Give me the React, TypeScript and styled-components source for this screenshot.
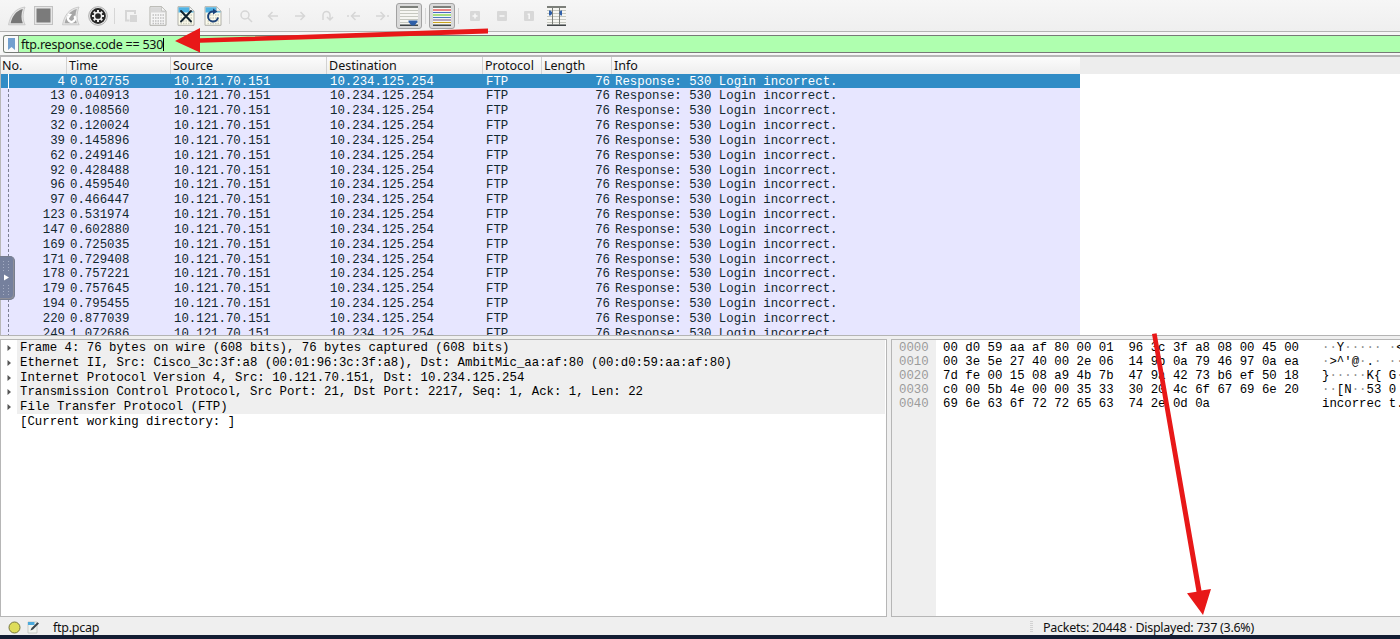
import React from "react";
import styled, { createGlobalStyle } from "styled-components";

const Global = createGlobalStyle`
  * { box-sizing: border-box; }
  body { margin: 0; overflow: hidden; background: #efefef; }
`;

const MONO = '"Liberation Mono", monospace';
const UI = '"Noto Sans", sans-serif';

const Window = styled.div`
  position: relative;
  display: flex;
  flex-direction: column;
  width: 1400px;
  height: 639px;
  overflow: hidden;
  background: #efefef;
  font-family: ${UI};
  font-size: 12.5px;
  color: #111;
`;

const Toolbar = styled.div`
  display: flex;
  align-items: center;
  height: 32px;
  flex: none;
  padding-left: 3px;
  background: linear-gradient(#f6f6f6, #efefef);
  border-bottom: 1px solid #b4b4b4;
`;

const Tool = styled.span<{ $w: number }>`
  display: flex;
  align-items: center;
  justify-content: center;
  flex: none;
  width: ${(p) => p.$w}px;
  height: 31px;
`;

const Pressed = styled.span`
  display: flex;
  align-items: center;
  justify-content: center;
  width: 26px;
  height: 26px;
  border: 1px solid #a2a2a2;
  border-radius: 3px;
  background: #dadada;
`;

const Separator = styled.span<{ $w: number }>`
  flex: none;
  width: ${(p) => p.$w}px;
  height: 16px;
  background: linear-gradient(#d6d6d6, #d6d6d6) center / 1px 100% no-repeat;
`;

const FilterBar = styled.div`
  display: flex;
  flex: none;
  height: 23px;
  padding: 3px 0 2px 3px;
  background: #f6f6f6;
`;

const FilterInput = styled.div`
  display: flex;
  align-items: center;
  flex: 1;
  height: 18px;
  border: 1px solid #767b76;
  border-right: 0;
  border-radius: 3px 0 0 3px;
  background: #afffaf;
  overflow: hidden;
`;

const Bookmark = styled.span`
  display: flex;
  align-items: center;
  justify-content: center;
  width: 15px;
  height: 16px;
  background: #fafafa;
  border-right: 1px solid #8c968c;
`;

const FilterText = styled.span`
  padding: 1px 0 0 2px;
  line-height: 16px;
  letter-spacing: -0.23px;
  white-space: pre;
`;

const Caret = styled.span`
  width: 1px;
  height: 13px;
  background: #000;
`;

const PacketList = styled.div`
  position: relative;
  flex: none;
  height: 281px;
  overflow: hidden;
  background: #fff;
  border-top: 2px solid #b6b6b6;
  border-bottom: 1px solid #b4b4b4;
  border-left: 1px solid #b8b8b8;
`;

const COLS = "66px 104px 156px 156px 59px 70px 468px";

const HeaderRow = styled.div`
  display: grid;
  grid-template-columns: ${COLS};
  height: 16.6px;
  background: linear-gradient(#fcfcfc, #eeeeee) left / 1079px 100% no-repeat #ededed;
`;

const HeaderCell = styled.span<{ $first?: boolean; $last?: boolean }>`
  padding-left: ${(p) => (p.$first ? 1 : 2)}px;
  line-height: 17px;
  border-right: ${(p) => (p.$last ? "0" : "1px solid #d2d2d2")};
  white-space: nowrap;
`;

const PacketRow = styled.div<{ $selected?: boolean }>`
  display: grid;
  grid-template-columns: ${COLS};
  width: 1079px;
  height: 14.84px;
  font: 12.37px/14.84px ${MONO};
  color: ${(p) => (p.$selected ? "#fff" : "#12272e")};
  background: ${(p) => (p.$selected ? "#308cc6" : "#e7e6ff")};
`;

const Cell = styled.span<{ $right?: boolean }>`
  padding: ${(p) => (p.$right ? "1px 2px 0 0" : "1px 0 0 3px")};
  text-align: ${(p) => (p.$right ? "right" : "left")};
  white-space: pre;
`;

const Thread = styled.span`
  position: absolute;
  left: 7px;
  top: 17px;
  width: 1px;
  height: 262px;
  background: linear-gradient(#fff 15px, transparent 15px),
    repeating-linear-gradient(#7b7f93 0 3px, transparent 3px 5px);
`;

const Lower = styled.div`
  display: flex;
  flex: none;
  gap: 4px;
  height: 281px;
  padding-top: 3px;
`;

const Pane = styled.div<{ $w?: number }>`
  ${(p) => (p.$w ? `width: ${p.$w}px; flex: none;` : "flex: 1; min-width: 0;")}
  border: 1px solid #b6b6b6;
  background: #fff;
  overflow: hidden;
`;

const TreeRow = styled.div`
  display: flex;
  align-items: center;
  height: 14.84px;
  font: 12.37px/14.84px ${MONO};
  color: #000;
  white-space: pre;
`;

const TreeArrow = styled.span`
  display: flex;
  flex: none;
  width: 16px;
  padding: 1px 0 0 6px;
`;

const TreeText = styled.span<{ $plain?: boolean }>`
  flex: 1;
  height: 14.84px;
  padding: 1px 0 0 3px;
  margin-right: 1px;
  background: ${(p) => (p.$plain ? "transparent" : "#efefef")};
`;

const HexPane = styled(Pane)`
  display: flex;
  border-right: 0;
  font: 12.37px/14px ${MONO};
  color: #000;
  white-space: pre;
`;

const Offsets = styled.div`
  flex: none;
  width: 44px;
  padding: 1px 0 0 7px;
  background: #efefef;
  color: #9b9b9b;
`;

const HexBytes = styled.div`
  flex: none;
  width: 386px;
  padding: 1px 0 0 7px;
`;

const Ascii = styled.div`
  flex: none;
  padding-top: 1px;
`;

const Dot = styled.span`
  color: #8e8e8e;
`;

const StatusBar = styled.div`
  display: flex;
  align-items: center;
  flex: none;
  height: 18px;
  padding-top: 2px;
  background: #efefef;
  white-space: pre;
`;

const StatusIcons = styled.span`
  display: flex;
  align-items: center;
  gap: 6px;
  width: 53px;
  padding-left: 8px;
`;

const StatusText = styled.span<{ $w?: number; $spacing: number }>`
  width: ${(p) => (p.$w ? `${p.$w}px` : "auto")};
  line-height: 18px;
  padding-top: 1px;
  letter-spacing: ${(p) => p.$spacing}px;
`;

const Grip = styled.span`
  width: 3px;
  height: 12px;
  margin-right: 10px;
  background: repeating-linear-gradient(#d2d2d2 0 1px, transparent 1px 2px);
`;

const Desktop = styled.div`
  flex: 1;
  background: #131d33;
`;

const DrawerHandle = styled.div`
  position: absolute;
  left: 0;
  top: 256px;
  width: 15px;
  height: 44px;
  border: 1px solid #767d8f;
  border-left: 0;
  border-radius: 0 5px 5px 0;
  background: #75809d;
  box-shadow: inset -1px -1px 0 #8e8f99;
`;

const Annotations = styled.svg`
  position: absolute;
  left: 0;
  top: 0;
`;

const Fin = () => (
  <svg width="20" height="20" viewBox="0 0 20 20">
    <path d="M1.5 18.8C3.5 9 8 2.5 18 1C15.5 8 15.5 14 18.2 18.8Z" fill="#e4e4e4" stroke="#bdbdbd" strokeWidth=".7" />
    <path d="M3.6 17.3C5.5 9.5 9 4.7 15.8 2.9C14 8 14 13 15.8 17.3Z" fill="#777" />
  </svg>
);

const Stop = () => (
  <svg width="19" height="19" viewBox="0 0 19 19">
    <rect x=".5" y=".5" width="18" height="18" fill="#e6e6e6" stroke="#c2c2c2" />
    <rect x="2.5" y="2.5" width="14" height="14" fill="#7b7b7b" />
  </svg>
);

const Restart = () => (
  <svg width="20" height="20" viewBox="0 0 20 20">
    <path d="M1.5 18.8C3.5 9 8 2.5 18 1C15.5 8 15.5 14 18.2 18.8Z" fill="#e6e6e6" stroke="#bdbdbd" strokeWidth=".7" />
    <path d="M3.6 17.3C5.5 9.5 9 4.7 15.8 2.9C14 8 14 13 15.8 17.3Z" fill="#a6a6a6" />
    <path d="M7.7 10A3.6 3.6 0 1 0 13.3 10" fill="none" stroke="#fff" strokeWidth="2.2" />
    <path d="M6.5 7.5L11 8L8.2 12Z" fill="#fff" />
  </svg>
);

const TEETH = [0, 45, 90, 135, 180, 225, 270, 315];
const Gear = () => (
  <svg width="20" height="20" viewBox="0 0 20 20">
    <circle cx="10" cy="10" r="9.3" fill="#eee" stroke="#999" strokeWidth=".8" />
    <circle cx="10" cy="10" r="7.9" fill="#262626" />
    {TEETH.map((a) => (
      <rect key={a} x="9" y="4" width="2" height="2.4" fill="#eee" transform={`rotate(${a} 10 10)`} />
    ))}
    <circle cx="10" cy="10" r="3.6" fill="#262626" stroke="#eee" strokeWidth="1.5" />
  </svg>
);

const OpenFile = () => (
  <svg width="16" height="16" viewBox="0 0 16 16" fill="none" stroke="#d6d6d6" strokeWidth="2">
    <path d="M6.5 12.5H3V3H12V6" />
    <rect x="7" y="7" width="7" height="7" fill="#d6d6d6" stroke="none" />
  </svg>
);

const FileIcon = ({ kind }: { kind: "save" | "close" | "reload" }) => (
  <svg width="18" height="20" viewBox="0 0 18 20">
    <path d="M1 .7H12.5L17 5V19.3H1Z" fill={kind === "save" ? "#f5f5f5" : "#fbfbec"} stroke="#b0b0aa" />
    <path d="M1.5 1.2H12.5L16.5 5V6.5H1.5Z" fill={kind === "save" ? "#d8d8d8" : "#4fb2e4"} />
    <path d="M12.5 .7V5H17Z" fill="#f7f7f7" stroke="#b4b4ae" strokeWidth=".6" />
    <path d="M3.5 9H15M3.5 12H15M3.5 15H15M3.5 17.5H15" stroke={kind === "save" ? "#c0c0c0" : "#d0d0c0"} strokeWidth="1.5" strokeDasharray="1.5 1" />
    {kind === "close" && <path d="M4 5L14 15.5M14 5L4 15.5" stroke="#10222f" strokeWidth="1.9" strokeLinecap="round" />}
    {kind === "reload" && (
      <>
        <path d="M14 11.5A5 5 0 1 1 9.5 5.5" fill="none" stroke="#1d4379" strokeWidth="2" />
        <path d="M9 2.4L13.4 5.5L9 8.6Z" fill="#1d4379" />
      </>
    )}
  </svg>
);

const Faint = ({ d }: { d: string }) => (
  <svg width="16" height="16" viewBox="0 0 16 16" fill="none" stroke="#d6d6d6" strokeWidth="1.5">
    <path d={d} />
  </svg>
);

const AutoScroll = () => (
  <svg width="18" height="20" viewBox="0 0 18 20">
    <rect width="18" height="20" fill="#f6f6f2" />
    <path d="M0 1H18" stroke="#7c7f7a" strokeWidth="2" />
    <path d="M0 19.2H18" stroke="#2e3436" strokeWidth="1.4" />
    <path d="M0 4.5H18M0 7.5H18M0 10.5H18M0 13.5H18M0 16.5H18" stroke="#c6c8c0" />
    <path d="M8.5 14.5H17.5V16L14.5 19.5H11.5L8.5 16Z" fill="#2f5fa8" />
  </svg>
);

const LINES = ["#d22", "#4a69c0", "#62c81c", "#4a79c0", "#80608c", "#c9a21c"];
const Colorize = () => (
  <svg width="18" height="20" viewBox="0 0 18 20">
    <rect width="18" height="20" fill="#fbfbf8" />
    <path d="M0 1H18" stroke="#7c7f7a" strokeWidth="2" />
    {LINES.map((c, i) => (
      <path key={i} d={`M0 ${4 + i * 2.5}H18`} stroke={c} strokeWidth="1.1" />
    ))}
    <path d="M0 19.2H18" stroke="#2e3436" strokeWidth="1.4" />
  </svg>
);

const ZoomBox = ({ d }: { d: string }) => (
  <svg width="12" height="12" viewBox="0 0 12 12">
    <rect x="1" y="1" width="10" height="10" rx="1" fill="#d8d8d8" />
    <path d={d} stroke="#f8f8f8" strokeWidth="1.5" fill="none" />
  </svg>
);

const ResizeColumns = () => (
  <svg width="19" height="20" viewBox="0 0 19 20">
    <rect width="19" height="20" fill="#f6f6f2" />
    <path d="M0 1H19" stroke="#7c7f7a" strokeWidth="2" />
    <path d="M0 19.2H19" stroke="#2e3436" strokeWidth="1.4" />
    <path d="M0 4.5H19M0 7.5H19M0 10.5H19M0 13.5H19M0 16.5H19" stroke="#c6c8c0" />
    <path d="M5.5 1V19M12.5 1V19" stroke="#7c7f7a" />
    <path d="M2 4.5H3.5L5 6V8L3.5 9.5H2ZM15 4.5H13.8L12.5 6V8L13.8 9.5H15Z" fill="#2f5fa8" />
  </svg>
);

const PACKETS: [number, string][] = [
  [4, "0.012755"], [13, "0.040913"], [29, "0.108560"], [32, "0.120024"],
  [39, "0.145896"], [62, "0.249146"], [92, "0.428488"], [96, "0.459540"],
  [97, "0.466447"], [123, "0.531974"], [147, "0.602880"], [169, "0.725035"],
  [171, "0.729408"], [178, "0.757221"], [179, "0.757645"], [194, "0.795455"],
  [220, "0.877039"], [249, "1.072686"],
];

const TREE = [
  "Frame 4: 76 bytes on wire (608 bits), 76 bytes captured (608 bits)",
  "Ethernet II, Src: Cisco_3c:3f:a8 (00:01:96:3c:3f:a8), Dst: AmbitMic_aa:af:80 (00:d0:59:aa:af:80)",
  "Internet Protocol Version 4, Src: 10.121.70.151, Dst: 10.234.125.254",
  "Transmission Control Protocol, Src Port: 21, Dst Port: 2217, Seq: 1, Ack: 1, Len: 22",
  "File Transfer Protocol (FTP)",
];

const HEX = [
  ["0000", "00 d0 59 aa af 80 00 01  96 3c 3f a8 08 00 45 00", "··Y····· ·<"],
  ["0010", "00 3e 5e 27 40 00 2e 06  14 9b 0a 79 46 97 0a ea", "·>^'@·.· ··"],
  ["0020", "7d fe 00 15 08 a9 4b 7b  47 9a 42 73 b6 ef 50 18", "}·····K{ G·"],
  ["0030", "c0 00 5b 4e 00 00 35 33  30 20 4c 6f 67 69 6e 20", "··[N··53 0 "],
  ["0040", "69 6e 63 6f 72 72 65 63  74 2e 0d 0a", "incorrec t."],
];

const HEADERS = ["No.", "Time", "Source", "Destination", "Protocol", "Length", "Info"];

export default function App() {
  return (
    <Window>
      <Global />
      <Toolbar>
        <Tool $w={27}><Fin /></Tool>
        <Tool $w={27}><Stop /></Tool>
        <Tool $w={28}><Restart /></Tool>
        <Tool $w={26}><Gear /></Tool>
        <Separator $w={6} />
        <Tool $w={27}><OpenFile /></Tool>
        <Tool $w={28}><FileIcon kind="save" /></Tool>
        <Tool $w={27}><FileIcon kind="close" /></Tool>
        <Tool $w={27}><FileIcon kind="reload" /></Tool>
        <Separator $w={6} />
        <Tool $w={27}><Faint d="M10 10L14 14M7 3A4 4 0 1 0 7 11A4 4 0 1 0 7 3" /></Tool>
        <Tool $w={27}><Faint d="M13 8H3.5M7.5 4L3.5 8L7.5 12" /></Tool>
        <Tool $w={27}><Faint d="M3 8H12.5M8.5 4L12.5 8L8.5 12" /></Tool>
        <Tool $w={27}><Faint d="M4 12V7A3.5 3.5 0 0 1 11 7V12M8 9L11 12L14 9" /></Tool>
        <Tool $w={28}><Faint d="M14 8H6M9.5 4L5.5 8L9.5 12M1 8H3" /></Tool>
        <Tool $w={27}><Faint d="M2 8H10M6.5 4L10.5 8L6.5 12M13 8H15" /></Tool>
        <Tool $w={27}><Pressed><AutoScroll /></Pressed></Tool>
        <Separator $w={6} />
        <Tool $w={27}><Pressed><Colorize /></Pressed></Tool>
        <Separator $w={6} />
        <Tool $w={27}><ZoomBox d="M3.5 6H8.5M6 3.5V8.5" /></Tool>
        <Tool $w={27}><ZoomBox d="M3.5 6H8.5" /></Tool>
        <Tool $w={27}><ZoomBox d="M4.6 4.2H6.2V9" /></Tool>
        <Tool $w={28}><ResizeColumns /></Tool>
      </Toolbar>

      <FilterBar>
        <FilterInput>
          <Bookmark>
            <svg width="7" height="12" viewBox="0 0 7 12"><path d="M0 0H7V12L3.5 9L0 12Z" fill="#729fcf" /></svg>
          </Bookmark>
          <FilterText>ftp.response.code == 530</FilterText>
          <Caret />
        </FilterInput>
      </FilterBar>

      <PacketList>
        <HeaderRow>
          {HEADERS.map((h, i) => (
            <HeaderCell key={h} $first={i === 0} $last={i === 6}>{h}</HeaderCell>
          ))}
        </HeaderRow>
        {PACKETS.map(([no, time], i) => (
          <PacketRow key={no} $selected={i === 0}>
            <Cell $right>{no}</Cell>
            <Cell>{time}</Cell>
            <Cell>10.121.70.151</Cell>
            <Cell>10.234.125.254</Cell>
            <Cell>FTP</Cell>
            <Cell $right>76</Cell>
            <Cell>Response: 530 Login incorrect.</Cell>
          </PacketRow>
        ))}
        <Thread />
      </PacketList>

      <Lower>
        <Pane $w={887}>
          {TREE.map((t) => (
            <TreeRow key={t}>
              <TreeArrow>
                <svg width="5" height="8" viewBox="0 0 5 8"><path d="M.5 1L4 4L.5 7Z" fill="#555" /></svg>
              </TreeArrow>
              <TreeText>{t}</TreeText>
            </TreeRow>
          ))}
          <TreeRow>
            <TreeArrow />
            <TreeText $plain>[Current working directory: ]</TreeText>
          </TreeRow>
        </Pane>
        <HexPane>
          <Offsets>{HEX.map((r) => <div key={r[0]}>{r[0]}</div>)}</Offsets>
          <HexBytes>{HEX.map((r) => <div key={r[0]}>{r[1]}</div>)}</HexBytes>
          <Ascii>
            {HEX.map((r) => (
              <div key={r[0]}>
                {r[2].split(/(·+)/).map((s, i) => (s.startsWith("·") ? <Dot key={i}>{s}</Dot> : s))}
              </div>
            ))}
          </Ascii>
        </HexPane>
      </Lower>

      <StatusBar>
        <StatusIcons>
          <svg width="13" height="13" viewBox="0 0 13 13"><circle cx="6.5" cy="6.5" r="5.5" fill="#dedc5a" stroke="#77773c" /></svg>
          <svg width="13" height="13" viewBox="0 0 13 13">
            <path d="M1 1H10V12H1Z" fill="#f0f3ef" stroke="#b9bdb9" strokeWidth=".7" />
            <path d="M1 1H7.5V4H1Z" fill="#4aa9dc" />
            <path d="M3.5 9.5L4.5 7L10.5 1.2L12 2.6L6 8.5Z" fill="#39434a" />
          </svg>
        </StatusIcons>
        <StatusText $w={977} $spacing={-0.25}>ftp.pcap</StatusText>
        <Grip />
        <StatusText $spacing={-0.27}>Packets: 20448 · Displayed: 737 (3.6%)</StatusText>
      </StatusBar>
      <Desktop />

      <DrawerHandle>
        <svg width="14" height="42" viewBox="0 0 14 42">
          <path d="M3.5 4V14M8.5 4V14M3.5 28V38M8.5 28V38" stroke="#a4acc2" strokeDasharray="1 2" />
          <path d="M4 17.5L9 20.5L4 23.5Z" fill="#fff" />
        </svg>
      </DrawerHandle>

      <Annotations width="1400" height="639" viewBox="0 0 1400 639" fill="#e81818">
        <path d="M175 41L200 28V38.3L488 28.5V33.5L200 42.7V52.5Z" />
        <path d="M1152 334L1156.6 333.3L1201.5 590.5L1211 589L1203 615L1187 593.3L1196.5 591.8Z" />
      </Annotations>
    </Window>
  );
}
